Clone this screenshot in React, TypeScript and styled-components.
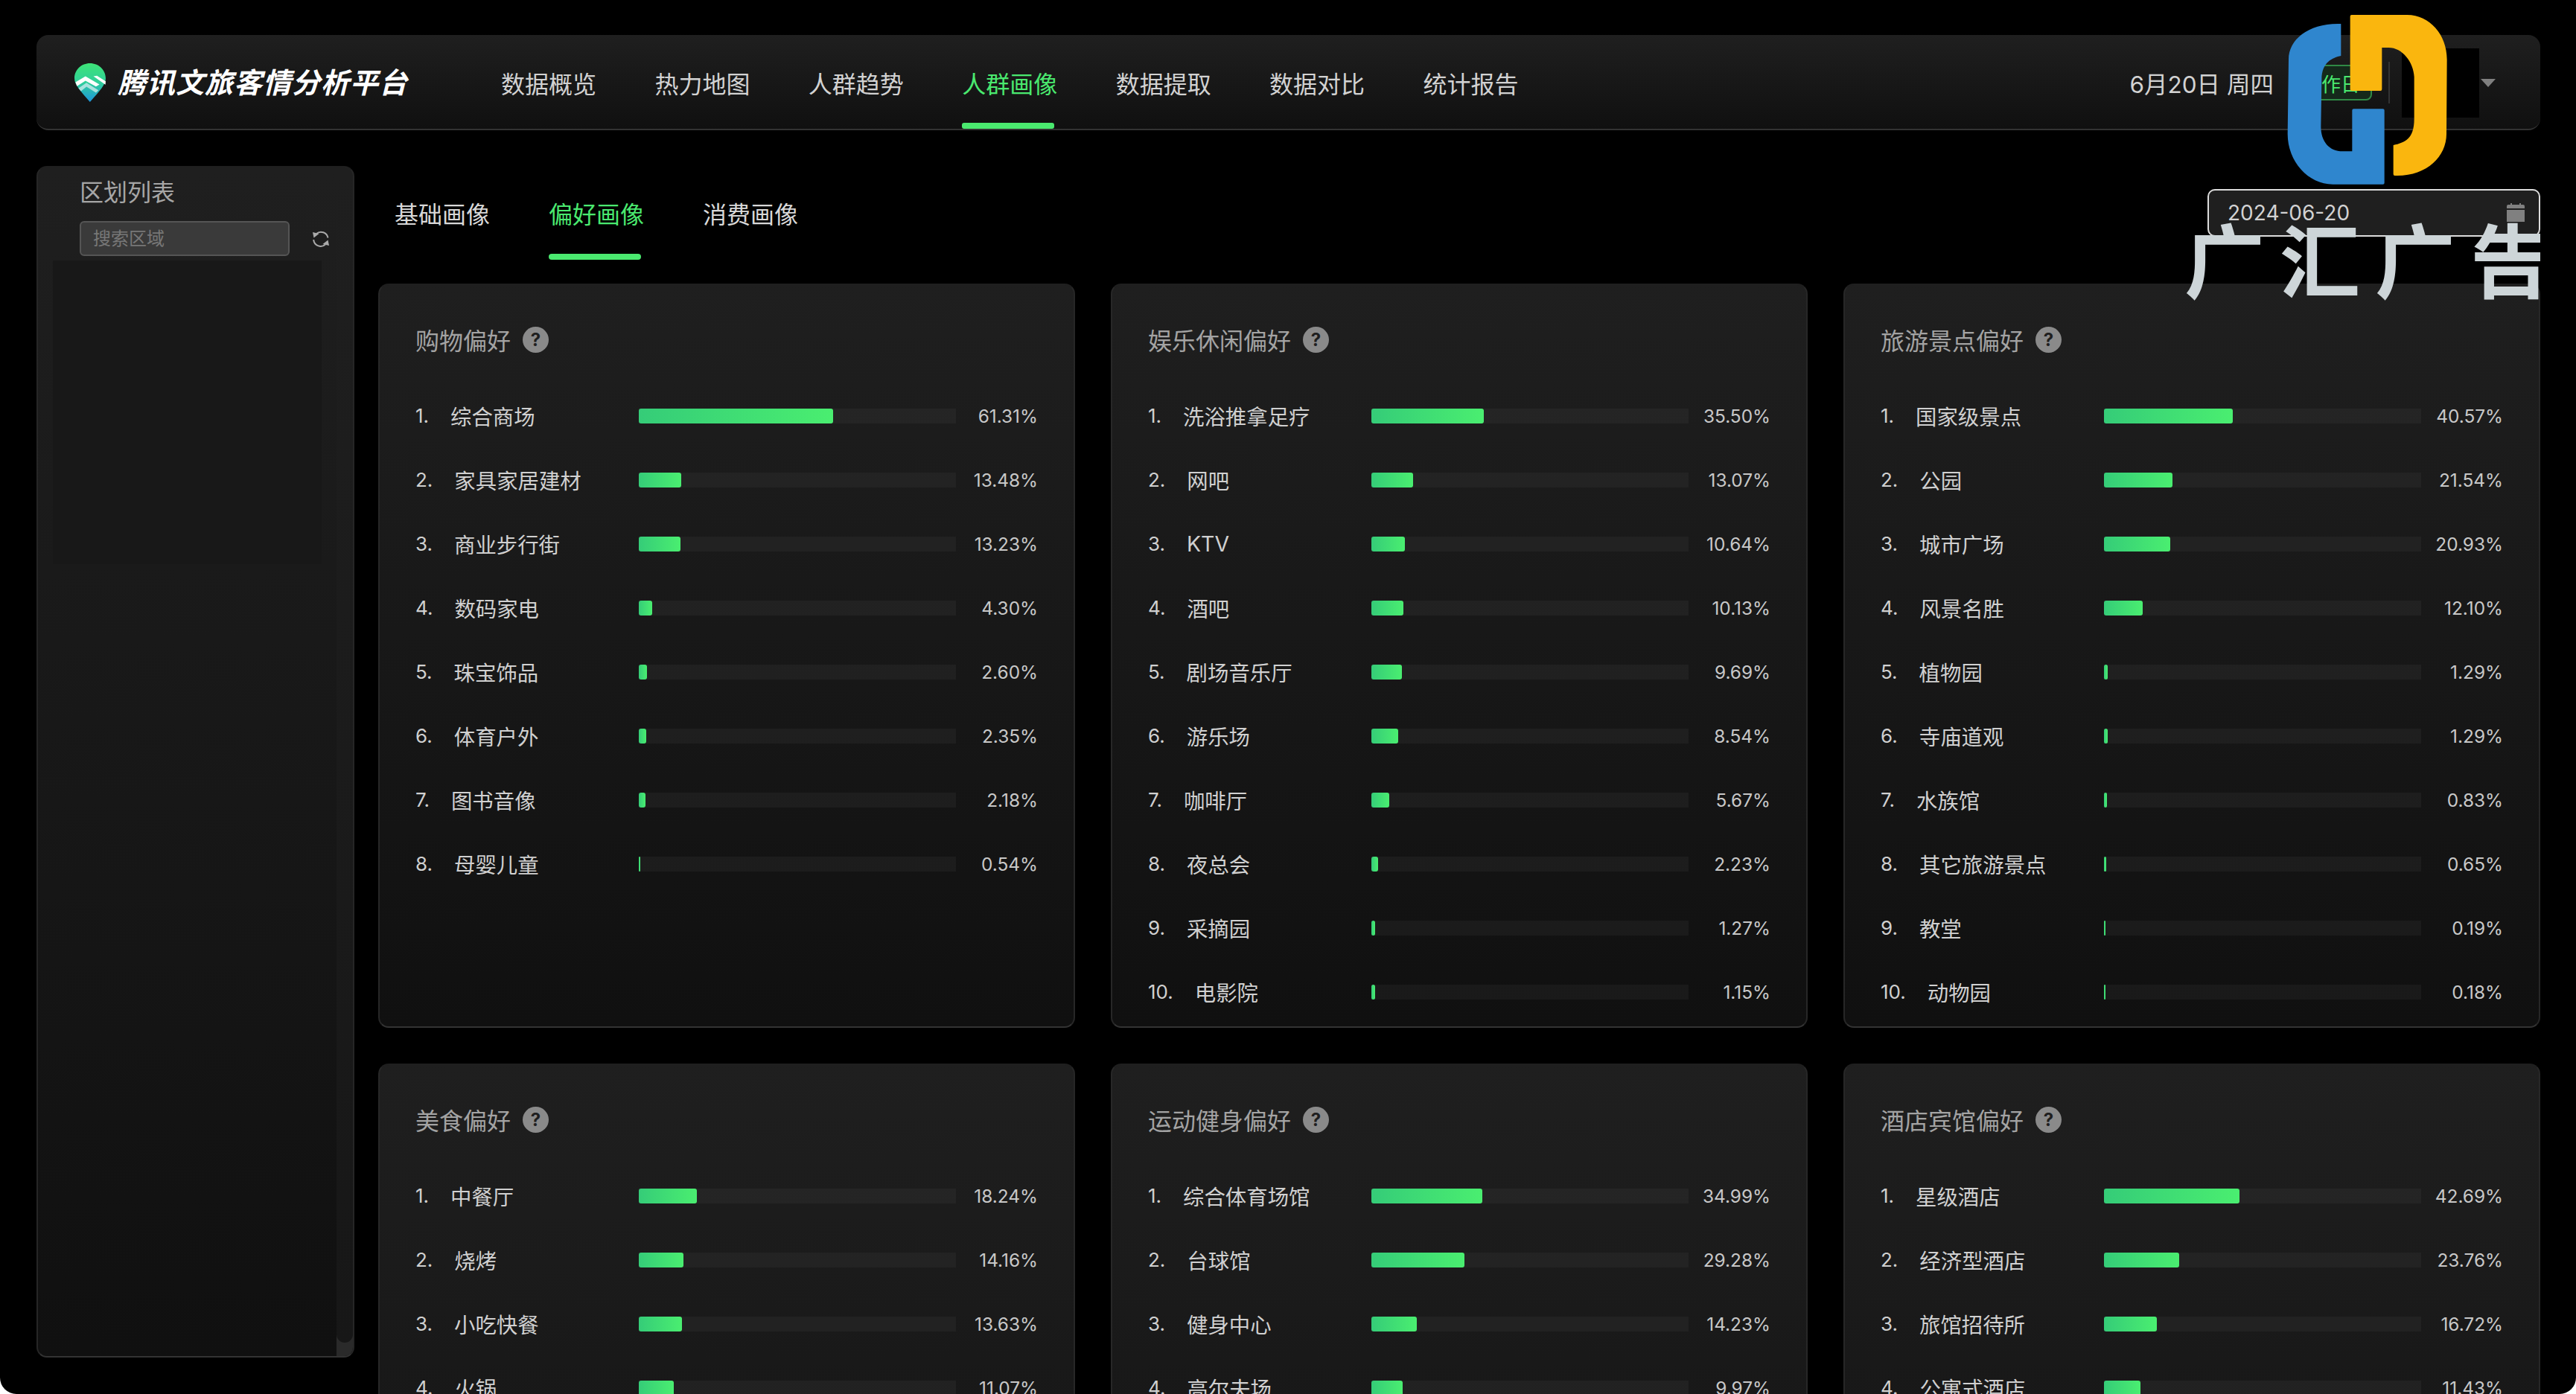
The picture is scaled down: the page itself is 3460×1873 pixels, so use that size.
import React from "react";
import styled, { createGlobalStyle } from "styled-components";

const Global = createGlobalStyle`
  html, body { margin: 0; padding: 0; background: #ffffff; }
  * { box-sizing: border-box; }
  body { font-family: Inter, "Noto Sans CJK SC", sans-serif; overflow: hidden; }
`;

const Screen = styled.div`
  position: relative;
  width: 3460px;
  height: 1873px;
  padding: 47px 48px 0 49px;
  background: #000;
  border-radius: 0 0 22px 22px;
  overflow: hidden;
`;

const Header = styled.header`
  display: flex;
  align-items: center;
  height: 128px;
  padding: 0 60px 0 51px;
  border-radius: 16px;
  background: linear-gradient(180deg, #1f1f1f, #101010);
  border-bottom: 2px solid #333;
`;

const Brand = styled.div`
  display: flex;
  align-items: center;
  gap: 16px;
  width: 573px;
  padding-top: 2px;
`;

const BrandName = styled.div`
  font-size: 38px;
  line-height: 46px;
  font-weight: 700;
  font-style: italic;
  letter-spacing: 1px;
  color: #fff;
  white-space: nowrap;
`;

const Nav = styled.nav`
  display: flex;
  gap: 78.4px;
  align-self: stretch;
`;

const NavItem = styled.div<{ $active?: boolean }>`
  position: relative;
  display: flex;
  align-items: center;
  font-size: 32px;
  padding-top: 2px;
  color: ${(p) => (p.$active ? "#4ae96f" : "#d2d2d2")};
  white-space: nowrap;
  &::after {
    content: "";
    display: ${(p) => (p.$active ? "block" : "none")};
    position: absolute;
    left: 0;
    bottom: 0;
    width: 124px;
    height: 8px;
    border-radius: 3px;
    background: #4ae96f;
  }
`;

const HeaderRight = styled.div`
  display: flex;
  align-items: center;
  margin-left: auto;
  padding-top: 2px;
`;

const DateLabel = styled.div`
  font-size: 31.5px;
  color: #d2d2d2;
  white-space: nowrap;
  margin-right: 22px;
`;

const DayBadge = styled.div`
  display: flex;
  align-items: center;
  height: 48px;
  padding: 0 14px;
  font-size: 26px;
  color: #4ae96f;
  background: #15291b;
  border: 2px solid #2f8a45;
  border-radius: 8px;
  white-space: nowrap;
`;

const Divider = styled.div`
  width: 2px;
  height: 56px;
  margin: 0 16px 0 22px;
  background: #333;
`;

const Redacted = styled.div`
  width: 104px;
  height: 93px;
  background: #000;
`;

const Caret = styled.div`
  width: 0;
  height: 0;
  margin-left: 2px;
  border-left: 10px solid transparent;
  border-right: 10px solid transparent;
  border-top: 11px solid #808080;
`;

const Body = styled.div`
  display: flex;
  align-items: flex-start;
  gap: 32px;
  margin-top: 48px;
`;

const Sidebar = styled.aside`
  position: relative;
  flex: 0 0 427px;
  height: 1601px;
  padding-top: 11px;
  border-radius: 14px;
  background: linear-gradient(180deg, #1f1f1f, #101010);
  border: 2px solid #262626;
  border-top-color: #1f1f1f;
  border-bottom-color: #333;
  overflow: hidden;
`;

const SideTitle = styled.div`
  padding-left: 56px;
  font-size: 32px;
  line-height: 46px;
  color: #a6a6a6;
`;

const SearchRow = styled.div`
  display: flex;
  align-items: center;
  gap: 30px;
  margin-top: 15px;
  padding-left: 56px;
`;

const SearchInput = styled.input`
  width: 282px;
  height: 47px;
  padding: 0 16px;
  border: 2px solid #555;
  border-radius: 6px;
  background: #3a3a3a;
  font-family: inherit;
  font-size: 24px;
  color: #ccc;
  outline: none;
  &::placeholder { color: #777; opacity: 1; }
`;

const RegionList = styled.div`
  width: 361px;
  height: 408px;
  margin: 6px 0 0 20px;
  background: #181818;
`;

const ScrollTrack = styled.div`
  position: absolute;
  top: 0;
  right: 0;
  bottom: 0;
  width: 22px;
  background: #2a2a2a;
`;

const ScrollThumb = styled.div`
  height: calc(100% - 18px);
  border-radius: 0 0 11px 11px;
  background: linear-gradient(180deg, #1f1f1f, #171717);
`;

const Main = styled.main`
  flex: 1;
  min-width: 0;
`;

const TabRow = styled.div`
  display: flex;
  justify-content: space-between;
  align-items: flex-start;
  height: 158px;
`;

const Tabs = styled.div`
  display: flex;
  gap: 79px;
  padding-left: 22px;
`;

const Tab = styled.div<{ $active?: boolean }>`
  position: relative;
  display: flex;
  align-items: center;
  height: 126px;
  font-size: 32px;
  color: ${(p) => (p.$active ? "#4ae96f" : "#d8d8d8")};
  white-space: nowrap;
  &::after {
    content: "";
    display: ${(p) => (p.$active ? "block" : "none")};
    position: absolute;
    left: 0;
    bottom: 0;
    width: 124px;
    height: 8px;
    border-radius: 4px;
    background: #4ae96f;
  }
`;

const DateInput = styled.div`
  display: flex;
  align-items: center;
  justify-content: space-between;
  width: 447px;
  height: 64px;
  margin-top: 31px;
  padding: 0 18px 0 25px;
  border: 2px solid #dcdcdc;
  border-radius: 10px;
  background: #1f1f1f;
  font-size: 28px;
  color: #d2d2d2;
`;

const CardGrid = styled.div`
  display: grid;
  grid-template-columns: repeat(3, 936px);
  grid-auto-rows: 1000px;
  column-gap: 48px;
  row-gap: 48px;
`;

const Card = styled.section`
  padding: 0 48px 0 48px;
  border-radius: 14px;
  background: linear-gradient(180deg, #1f1f1f, #101010);
  border: 2px solid #272727;
  border-top-color: #1f1f1f;
  border-bottom-color: #333;
`;

const CardHead = styled.div`
  display: flex;
  align-items: center;
  gap: 16px;
  height: 48px;
  margin-top: 49px;
`;

const CardTitle = styled.h3`
  margin: 0;
  font-size: 32px;
  font-weight: 400;
  color: #a3a3a3;
`;

const HelpDot = styled.span`
  display: flex;
  align-items: center;
  justify-content: center;
  width: 35px;
  height: 35px;
  margin-top: 1px;
  border-radius: 50%;
  background: #8a8a8a;
  font-size: 24px;
  font-weight: 700;
  color: #1f1f1f;
`;

const Rows = styled.div`
  display: flex;
  flex-direction: column;
  gap: 46px;
  margin-top: 59px;
`;

const Row = styled.div`
  display: grid;
  grid-template-columns: 300px 426px 1fr;
  align-items: center;
  height: 40px;
`;

const RowName = styled.div`
  display: flex;
  align-items: center;
  gap: 29px;
  margin-top: -2px;
  white-space: nowrap;
  color: #d0d0d0;
`;

const RowRank = styled.span`
  font-size: 26px;
`;

const RowLabel = styled.span`
  font-size: 28.4px;
`;

const Track = styled.div`
  height: 20px;
  background: rgba(255, 255, 255, 0.04);
`;

const Fill = styled.div`
  height: 100%;
  min-width: 2px;
  border-radius: 3px;
  background: linear-gradient(90deg, #35cc78, #4aee70);
`;

const Percent = styled.div`
  font-size: 24.4px;
  text-align: right;
  color: #c8c8c8;
`;

const Watermark = styled.div`
  position: absolute;
  top: 280px;
  right: 48px;
  width: 478px;
  overflow: hidden;
  font-size: 108px;
  line-height: 146px;
  font-weight: 700;
  letter-spacing: 20px;
  color: #cdd5d8;
  white-space: nowrap;
  pointer-events: none;
`;

const BadgeLogo = styled.svg`
  position: absolute;
  top: 0;
  left: 3000px;
  width: 460px;
  height: 260px;
  pointer-events: none;
`;

type Item = [string, number];
type Group = { title: string; items: Item[] };

const groups: Group[] = [
  {
    title: "购物偏好",
    items: [
      ["综合商场", 61.31],
      ["家具家居建材", 13.48],
      ["商业步行街", 13.23],
      ["数码家电", 4.3],
      ["珠宝饰品", 2.6],
      ["体育户外", 2.35],
      ["图书音像", 2.18],
      ["母婴儿童", 0.54],
    ],
  },
  {
    title: "娱乐休闲偏好",
    items: [
      ["洗浴推拿足疗", 35.5],
      ["网吧", 13.07],
      ["KTV", 10.64],
      ["酒吧", 10.13],
      ["剧场音乐厅", 9.69],
      ["游乐场", 8.54],
      ["咖啡厅", 5.67],
      ["夜总会", 2.23],
      ["采摘园", 1.27],
      ["电影院", 1.15],
    ],
  },
  {
    title: "旅游景点偏好",
    items: [
      ["国家级景点", 40.57],
      ["公园", 21.54],
      ["城市广场", 20.93],
      ["风景名胜", 12.1],
      ["植物园", 1.29],
      ["寺庙道观", 1.29],
      ["水族馆", 0.83],
      ["其它旅游景点", 0.65],
      ["教堂", 0.19],
      ["动物园", 0.18],
    ],
  },
  {
    title: "美食偏好",
    items: [
      ["中餐厅", 18.24],
      ["烧烤", 14.16],
      ["小吃快餐", 13.63],
      ["火锅", 11.07],
    ],
  },
  {
    title: "运动健身偏好",
    items: [
      ["综合体育场馆", 34.99],
      ["台球馆", 29.28],
      ["健身中心", 14.23],
      ["高尔夫场", 9.97],
    ],
  },
  {
    title: "酒店宾馆偏好",
    items: [
      ["星级酒店", 42.69],
      ["经济型酒店", 23.76],
      ["旅馆招待所", 16.72],
      ["公寓式酒店", 11.43],
    ],
  },
];

const navItems = ["数据概览", "热力地图", "人群趋势", "人群画像", "数据提取", "数据对比", "统计报告"];
const tabs = ["基础画像", "偏好画像", "消费画像"];

const PinLogo = () => (
  <svg width="42" height="52" viewBox="0 0 125 155">
    <defs>
      <linearGradient id="pinGrad" x1="0" y1="0" x2="0" y2="1">
        <stop offset="0" stopColor="#3ee477" />
        <stop offset="0.5" stopColor="#2fcf9a" />
        <stop offset="1" stopColor="#1e96dc" />
      </linearGradient>
    </defs>
    <path d="M62 0C28 0 0 26 0 60C0 85 22 108 62 155C103 108 125 85 125 60C125 26 96 0 62 0Z" fill="url(#pinGrad)" />
    <path d="M4 76L44 52L100 85L86 93L44 70L10 92Z" fill="#fff" />
    <path d="M76 52L90 50L125 72L124 86Z" fill="#fff" />
    <path d="M16 100L48 78L96 108L86 118L48 94L26 112Z" fill="#a9e2de" />
  </svg>
);

const RefreshIcon = () => (
  <svg width="24" height="24" viewBox="0 0 24 24" fill="none" stroke="#aaa" strokeWidth="2">
    <path d="M6 5A9.5 9.5 0 0 1 21.5 10.5" />
    <path d="M2.2 13A9.5 9.5 0 0 0 18 19.5" />
    <path d="M1 3L9.5 5L2.5 10.5Z" fill="#aaa" stroke="none" />
    <path d="M23 21L14.5 19L21.5 13.5Z" fill="#aaa" stroke="none" />
  </svg>
);

const CalendarIcon = () => (
  <svg width="26" height="26" viewBox="0 0 26 26" fill="#808080">
    <path d="M3 2H6V0H8V2H18V0H20V2H23Q25 2 25 4V7H1V4Q1 2 3 2Z" />
    <path d="M1 9H25V25H1Z" />
  </svg>
);

export default function App() {
  return (
    <Screen>
      <Global />
      <Header>
        <Brand>
          <PinLogo />
          <BrandName>腾讯文旅客情分析平台</BrandName>
        </Brand>
        <Nav>
          {navItems.map((n) => (
            <NavItem key={n} $active={n === "人群画像"}>
              {n}
            </NavItem>
          ))}
        </Nav>
        <HeaderRight>
          <DateLabel>6月20日 周四</DateLabel>
          <DayBadge>工作日</DayBadge>
          <Divider />
          <Redacted />
          <Caret />
        </HeaderRight>
      </Header>
      <Body>
        <Sidebar>
          <SideTitle>区划列表</SideTitle>
          <SearchRow>
            <SearchInput placeholder="搜索区域" />
            <RefreshIcon />
          </SearchRow>
          <RegionList />
          <ScrollTrack>
            <ScrollThumb />
          </ScrollTrack>
        </Sidebar>
        <Main>
          <TabRow>
            <Tabs>
              {tabs.map((t) => (
                <Tab key={t} $active={t === "偏好画像"}>
                  {t}
                </Tab>
              ))}
            </Tabs>
            <DateInput>
              2024-06-20
              <CalendarIcon />
            </DateInput>
          </TabRow>
          <CardGrid>
            {groups.map((g) => (
              <Card key={g.title}>
                <CardHead>
                  <CardTitle>{g.title}</CardTitle>
                  <HelpDot>?</HelpDot>
                </CardHead>
                <Rows>
                  {g.items.map(([label, pct], i) => (
                    <Row key={label}>
                      <RowName>
                        <RowRank>{i + 1}.</RowRank>
                        <RowLabel>{label}</RowLabel>
                      </RowName>
                      <Track>
                        <Fill style={{ width: `${pct}%` }} />
                      </Track>
                      <Percent>{pct.toFixed(2)}%</Percent>
                    </Row>
                  ))}
                </Rows>
              </Card>
            ))}
          </CardGrid>
        </Main>
      </Body>
      <BadgeLogo viewBox="0 0 1380 780">
        <path
          d="M433 96L433 225C400 232 355 250 355 320L352 510C352 570 385 610 440 610L478 610L478 445Q478 439 484 439L602 439Q608 439 608 445L608 737Q608 743 602 743L400 743C300 743 218 650 218 540L222 240C222 160 300 96 420 96Z"
          fill="#2f86ce"
        />
        <path
          d="M470 66Q470 60 476 60L700 60C790 60 860 140 860 240L858 540C858 630 780 708 660 708L650 708Q644 708 644 702L644 585C690 575 728 560 728 480L728 310C725 250 680 192 625 192L598 192L598 360Q598 366 592 366L476 366Q470 366 470 360Z"
          fill="#fab60e"
        />
      </BadgeLogo>
      <Watermark>广汇广告</Watermark>
    </Screen>
  );
}
